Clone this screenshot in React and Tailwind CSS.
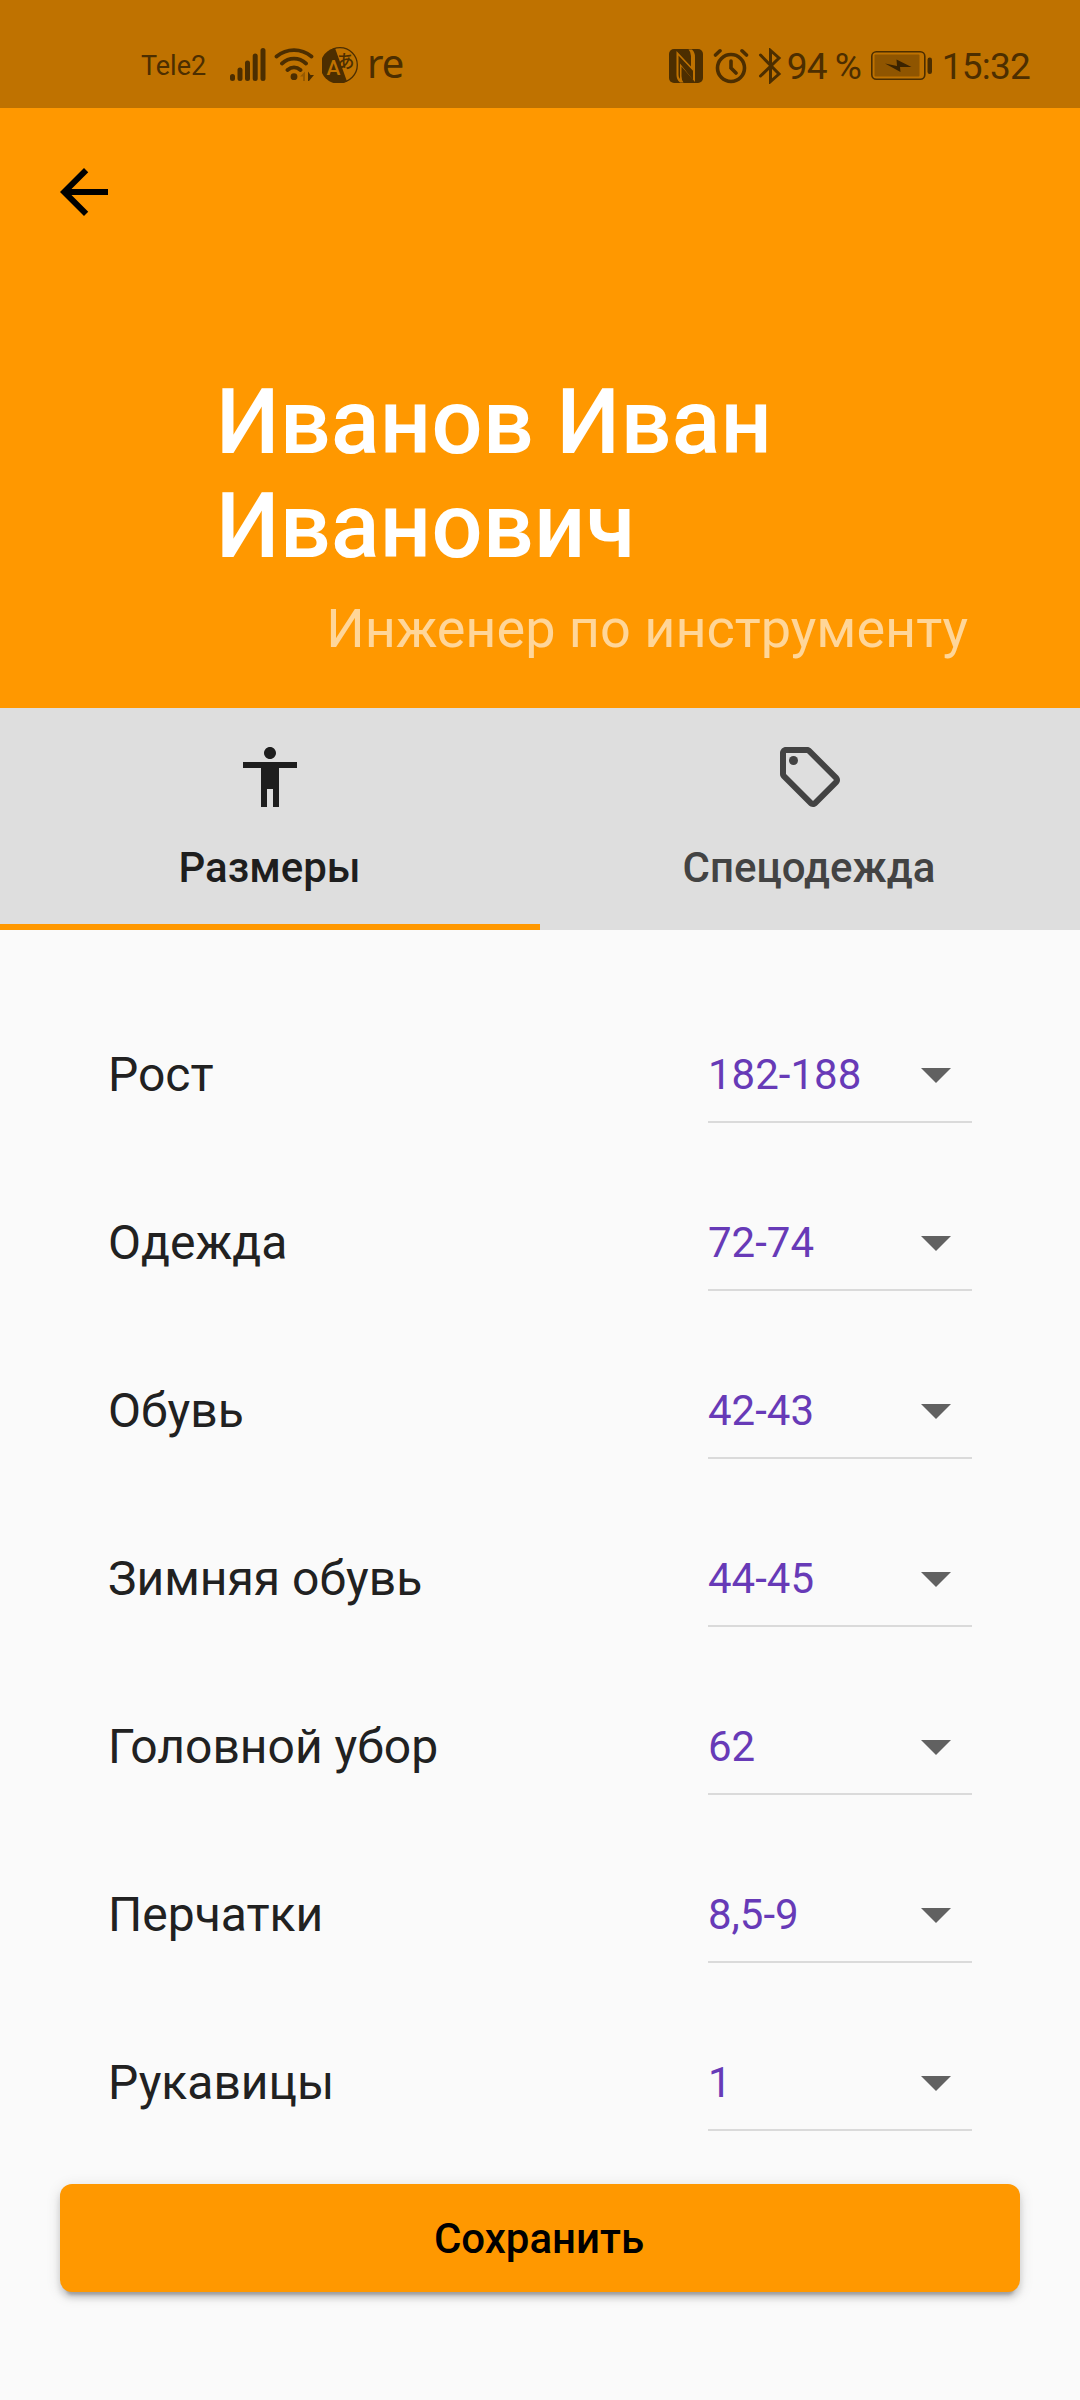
const ROWS = [
  ['Рост', '182-188'],
  ['Одежда', '72-74'],
  ['Обувь', '42-43'],
  ['Зимняя обувь', '44-45'],
  ['Головной убор', '62'],
  ['Перчатки', '8,5-9'],
  ['Рукавицы', '1'],
];

function LeftStatusIcons() {
  return (
    <div className="flex items-center">
      <svg className="ml-[25px] h-[36px] w-[36px]" viewBox="230 47 36 36" fill="none" stroke="currentColor" strokeWidth="5" strokeLinecap="round">
        <path d="M232.5 76.5v2M240 70v8.500M247.500 63v15.500M255.200 56v22.500M263 50.500v28" />
      </svg>
      <svg className="ml-[8px] h-[36px] w-[42px]" viewBox="274 47 42 36" fill="none" stroke="currentColor" strokeWidth="3.800" strokeLinecap="round">
        <path d="M276.500 56.500C287 48 301 48 311.500 56.500M282 63.500C289 57 299 57 306 63.500M287.500 70C291.500 66.500 296.500 66.500 300.500 70" />
        <circle cx="294" cy="76.700" r="3.400" fill="currentColor" stroke="none" />
        <path d="M300 76.500l5-5V81h-2v-4.500z" fill="currentColor" stroke="none" opacity=".35" />
        <path d="M308 71.500l2.500 3.500h3.500l-5 6h-1z" fill="currentColor" stroke="none" />
      </svg>
      <svg className="ml-[6px] h-[36px] w-[36px]" viewBox="0 0 36 36" fill="none">
        <circle cx="18" cy="18" r="17.300" stroke="currentColor" strokeWidth="1.300" />
        <path d="M13 1A18 18 0 1 0 25 34.500z" fill="currentColor" />
        <text x="4.500" y="28" fontFamily="Roboto" fontWeight="500" fontSize="21" fill="#bf7200">A</text>
        <text x="14.500" y="21" fontFamily="Noto Sans CJK JP" fontWeight="500" fontSize="18" fill="currentColor">あ</text>
      </svg>
    </div>
  );
}

function RightStatusIcons() {
  return (
    <div className="flex items-center">
      <svg className="h-[34px] w-[34px]" viewBox="0 0 34 34">
        <rect width="34" height="34" rx="5" fill="currentColor" />
        <path d="M7.500 2L22 17.500V7q0-4-2.500-6.500h3.500Q26 3 26 8v25L12.500 17.500V27q0 4 2 6.500H11Q7.500 31 7.500 26z" fill="#bf7200" />
        <path d="M9.500 6.500L24 21.800V31L11 14.500V30q-1.500-1.500-1.500-4z" fill="currentColor" />
      </svg>
      <svg className="ml-[10px] h-[36px] w-[36px]" viewBox="0 0 36 36" fill="none" stroke="currentColor" strokeWidth="3.600" strokeLinecap="round">
        <circle cx="18" cy="20" r="13.500" />
        <path d="M2.500 7l4.500-4.200M33.500 7L29 2.800M18 13v7l5 5" />
      </svg>
      <svg className="ml-[9px] h-[36px] w-[24px]" viewBox="0 0 24 36" fill="none" stroke="currentColor" strokeWidth="3" strokeLinecap="round" strokeLinejoin="miter">
        <path d="M2.500 7L21 26l-8.500 7.500V2.500L21 10 2.500 28" />
      </svg>
    </div>
  );
}

function Battery() {
  return (
    <svg className="h-[30px] w-[62px]" viewBox="0 0 62 30">
      <rect x=".8" y=".8" width="53" height="27.500" rx="4.500" fill="none" stroke="currentColor" strokeWidth="1.600" />
      <rect x="3.500" y="3.500" width="45" height="22" rx="1" fill="currentColor" opacity=".42" />
      <path d="M14 12.500l12 2.500-.5-6.500L40.500 16 29 16l.5 5z" fill="#3a2300" />
      <rect x="56.500" y="6.500" width="4.500" height="16.500" rx="2.200" fill="currentColor" />
    </svg>
  );
}

function StatusBar() {
  return (
    <div className="flex h-[108px] items-start bg-[#bf7200] text-[#4c2e00]">
      <div className="flex h-full w-full pl-[141px] pt-[47px]">
        <span className="mt-[3px] h-[32px] w-[64px] whitespace-nowrap text-[27px] leading-[32px]">Tele2</span>
        <div className="h-[36px]"><LeftStatusIcons /></div>
        <span className="-mt-[9px] ml-[9px] h-[50px] font-['Noto_Sans'] text-[40px] leading-[50px] tracking-[-1px]">re</span>
        <div className="ml-auto flex pr-[50px]">
          <div className="mt-[1px] h-[36px]"><RightStatusIcons /></div>
          <span className="-mt-[2px] ml-[5px] w-[84px] whitespace-nowrap text-[37px] leading-[44px] tracking-[-1px]">94 %</span>
          <div className="mt-[4px]"><Battery /></div>
          <span className="-mt-[2px] ml-[9px] whitespace-nowrap text-[37px] leading-[44px] tracking-[-0.8px]">15:32</span>
        </div>
      </div>
    </div>
  );
}

function Header() {
  return (
    <header className="h-[600px] bg-[#ff9800] pt-[48px]">
      <button className="ml-[48px] block h-[72px] w-[72px] text-black" aria-label="Назад">
        <svg className="h-[72px] w-[72px]" viewBox="0 0 24 24" fill="currentColor">
          <path d="M20 11H7.830l5.590-5.590L12 4l-8 8 8 8 1.410-1.410L7.830 13H20v-2z" />
        </svg>
      </button>
      <h1 className="ml-[216px] mt-[143px] w-[640px] text-[90px] font-medium leading-[104px] tracking-[0.22px] text-white">
        Иванов Иван Иванович
      </h1>
      <p className="mr-[112px] mt-[18px] text-right text-[54px] leading-[64px] text-white/60">Инженер по инструменту</p>
    </header>
  );
}

function Tabs() {
  return (
    <nav className="flex h-[222px] bg-[#dedede] text-[42px] font-medium leading-[48px]">
      <button className="flex w-1/2 flex-col items-center border-b-[6px] border-[#ff9800] pt-[33px] text-[#1e1e1e]">
        <svg className="h-[72px] w-[72px]" viewBox="0 0 24 24" fill="currentColor">
          <path d="M12 2c1.100 0 2 .9 2 2s-.9 2-2 2-2-.9-2-2 .9-2 2-2zm9 7h-6v13h-2v-6h-2v6H9V9H3V7h18v2z" />
        </svg>
        <span className="mt-[31px] pr-px">Размеры</span>
      </button>
      <button className="flex w-1/2 flex-col items-center pt-[33px] text-[#434343]">
        <svg className="h-[72px] w-[72px]" viewBox="0 0 24 24" fill="currentColor">
          <path d="M21.410 11.580l-9-9C12.050 2.220 11.550 2 11 2H4c-1.100 0-2 .9-2 2v7c0 .55.22 1.050.59 1.420l9 9c.36.36.86.58 1.410.58s1.050-.22 1.410-.59l7-7c.37-.36.59-.86.59-1.410s-.23-1.060-.59-1.420zM13 20.010L4 11V4h7v-.01l9 9-7 7.020z" />
          <circle cx="6.500" cy="6.500" r="1.500" />
        </svg>
        <span className="mt-[31px] pr-[2px]">Спецодежда</span>
      </button>
    </nav>
  );
}

function SizeRow({ label, value }) {
  return (
    <div className="flex h-[168px] items-start justify-between pl-[108px] pr-[108px]">
      <span className="mt-[45px] text-[48px] leading-[56px] text-[#212121]">{label}</span>
      <div className="flex h-[121px] w-[264px] items-start justify-between border-b-2 border-[#dadada] pt-[36px]">
        <span className="mt-[13px] text-[42px] leading-[48px] text-[#673ab7]">{value}</span>
        <svg className="h-[72px] w-[72px]" viewBox="0 0 24 24" fill="#616161">
          <path d="M7 10l5 5 5-5z" />
        </svg>
      </div>
    </div>
  );
}

export default function App() {
  return (
    <div className="flex h-[2400px] w-[1080px] flex-col overflow-hidden bg-[#fafafa] font-[Roboto,sans-serif]">
      <StatusBar />
      <Header />
      <Tabs />
      <main className="pt-[72px]">
        {ROWS.map(([label, value]) => (
          <SizeRow key={label} label={label} value={value} />
        ))}
      </main>
      <button className="mx-[60px] mt-[6px] h-[108px] rounded-[12px] bg-[#ff9800] pr-[2px] pt-[2px] text-[42px] font-medium leading-[48px] text-black shadow-[0_9px_3px_-6px_rgba(0,0,0,0.2),0_6px_6px_rgba(0,0,0,0.14),0_3px_15px_rgba(0,0,0,0.12)]">
        Сохранить
      </button>
    </div>
  );
}
